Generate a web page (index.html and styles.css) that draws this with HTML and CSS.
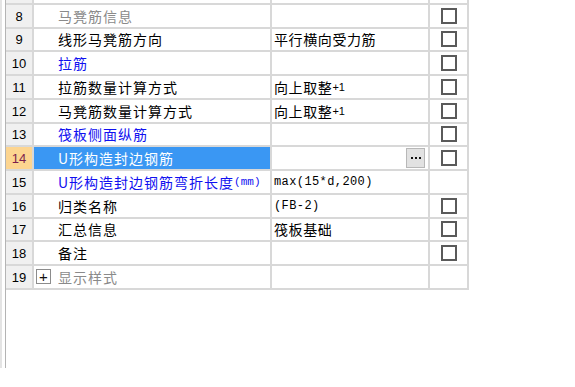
FILE: index.html
```html
<!DOCTYPE html>
<html>
<head>
  <link rel="stylesheet" href="styles.css">
</head>
<body>
  <div class="panel">
    <div class="sheet">
      <div class="grid">
        <div class="num">7</div><div class="name">马凳筋参数图</div><div class="val"></div><div class="chk"></div>

        <div class="num">8</div><div class="name group">马凳筋信息</div><div class="val"></div><div class="chk"><span class="box"></span></div>

        <div class="num">9</div><div class="name">线形马凳筋方向</div><div class="val">平行横向受力筋</div><div class="chk"><span class="box"></span></div>

        <div class="num">10</div><div class="name blue">拉筋</div><div class="val"></div><div class="chk"><span class="box"></span></div>

        <div class="num">11</div><div class="name">拉筋数量计算方式</div><div class="val">向上取整<span class="small">+1</span></div><div class="chk"><span class="box"></span></div>

        <div class="num">12</div><div class="name">马凳筋数量计算方式</div><div class="val">向上取整<span class="small">+1</span></div><div class="chk"><span class="box"></span></div>

        <div class="num">13</div><div class="name blue">筏板侧面纵筋</div><div class="val"></div><div class="chk"><span class="box"></span></div>

        <div class="num current">14</div><div class="name selected">U形构造封边钢筋</div><div class="val"><span class="more"><i></i><i></i><i></i></span></div><div class="chk"><span class="box"></span></div>

        <div class="num">15</div><div class="name blue">U形构造封边钢筋弯折长度<span class="mono">(mm)</span></div><div class="val mono">max(15*d,200)</div><div class="chk"></div>

        <div class="num">16</div><div class="name">归类名称</div><div class="val mono">(FB-2)</div><div class="chk"><span class="box"></span></div>

        <div class="num">17</div><div class="name">汇总信息</div><div class="val">筏板基础</div><div class="chk"><span class="box"></span></div>

        <div class="num">18</div><div class="name">备注</div><div class="val"></div><div class="chk"><span class="box"></span></div>

        <div class="num">19</div><div class="name group"><span class="expand">+</span>显示样式</div><div class="val"></div><div class="chk"></div>
      </div>
    </div>
  </div>
</body>
</html>
```

FILE: styles.css
```css
body {
  margin: 0;
  background: #fff;
  font-family: "Noto Sans CJK SC", sans-serif;
  font-size: 14px;
  color: #000;
  overflow: hidden;
}

.panel {
  height: 387px;
  border-left: 2px solid #e4e4e4;
  padding-left: 3px;
}

.sheet {
  height: 100%;
  border-left: 1px solid #b4b4b4;
}

.grid {
  display: grid;
  grid-template-columns: 28px 238px 158px 39px;
  grid-auto-rows: 23.75px;
  margin-top: -19px;
  width: 463px;
}

.grid > div {
  box-sizing: border-box;
  border-right: 2px solid #d8d8d8;
  border-bottom: 2px solid #d8d8d8;
  display: flex;
  align-items: center;
  white-space: nowrap;
  overflow: hidden;
}

.num {
  justify-content: center;
  background: #f0f0f0;
  font-family: "Liberation Sans", sans-serif;
  font-size: 13px;
  padding-top: 1px;
}

.num.current {
  background: #fdd590;
  color: #7c1d4d;
}

.name {
  padding-left: 24px;
  letter-spacing: 1px;
}

.name.group {
  color: #8a8a8a;
}

.name.blue {
  color: #1010f0;
}

.name.selected {
  background: #3a97f3;
  color: #fff;
}

.val {
  padding-left: 2px;
  letter-spacing: 0.6px;
  position: relative;
}

.small {
  font-family: "Liberation Sans", sans-serif;
  font-size: 11px;
  letter-spacing: 0;
}

.mono {
  font-family: "Liberation Mono", monospace;
  font-size: 12px;
  letter-spacing: 0.4px;
}

.name .mono {
  font-size: 11px;
  letter-spacing: 0;
}

.chk {
  justify-content: center;
}

.box {
  box-sizing: border-box;
  width: 16px;
  height: 16px;
  border: 2px solid #5a5a5a;
  background: #fff;
}

.more {
  position: absolute;
  right: 3px;
  top: 1px;
  width: 19px;
  height: 20px;
  box-sizing: border-box;
  background: #e2e2e2;
  border: 1px solid #b8b8b8;
  display: flex;
  align-items: center;
  justify-content: center;
  gap: 2px;
}

.more i {
  width: 2px;
  height: 2px;
  background: #111;
}

.expand {
  box-sizing: border-box;
  width: 15px;
  height: 15px;
  border: 1px solid #8c8c8c;
  margin-left: -22px;
  margin-right: 7px;
  display: flex;
  align-items: center;
  justify-content: center;
  font-family: "Liberation Sans", sans-serif;
  font-size: 15px;
  line-height: 1;
  color: #111;
  letter-spacing: 0;
}
```
